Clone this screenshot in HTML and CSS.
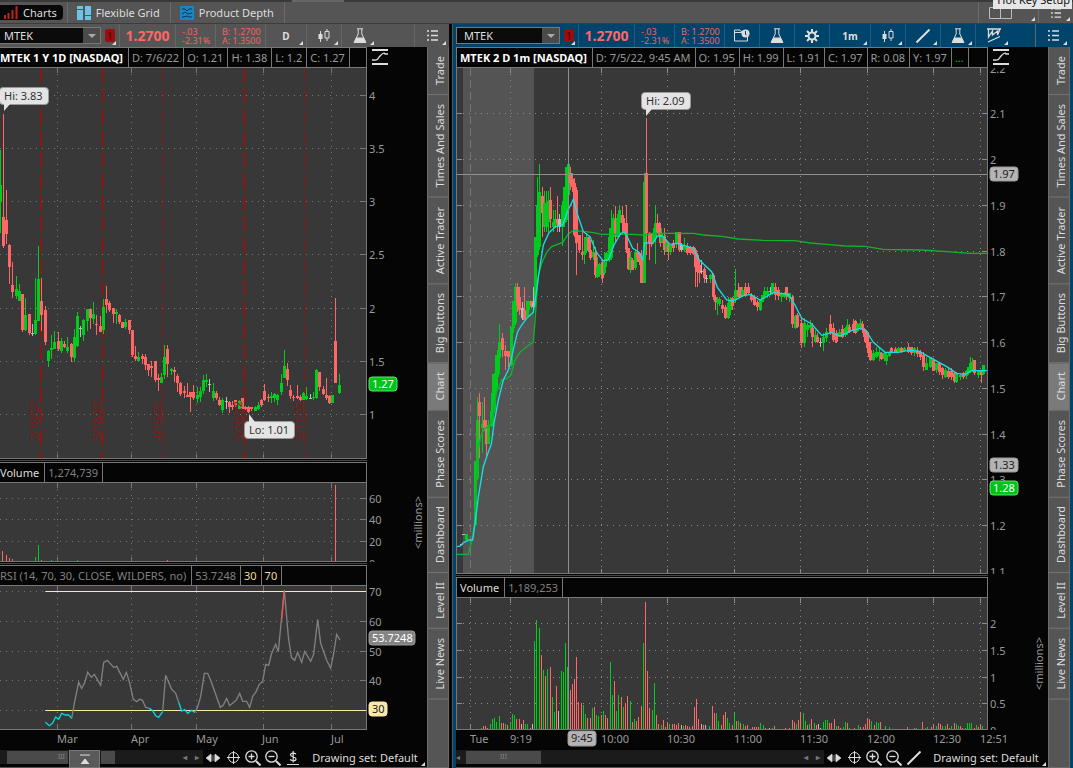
FILE: index.html
```html
<!DOCTYPE html>
<html lang="en">
<head>
  <meta charset="UTF-8">
  <meta name="viewport" content="width=device-width, initial-scale=1.0">
  <title>Charts - MTEK</title>
  <link rel="stylesheet" href="styles.css">
</head>
<body>

  <!-- Shared icons -->
  <svg class="icon-defs" aria-hidden="true">
    <symbol id="i-flask" viewBox="0 0 14 16"><path d="M4 .8h6M5.200 1v5L1.500 13.500h11L8.800 6V1" fill="none" stroke="currentColor"/><path d="M3.600 9.500h6.800l3.100 5.500H.5z" fill="currentColor"/></symbol>
    <symbol id="i-candles" viewBox="0 0 14 14"><path d="M3.500 2v11M10 0v12" stroke="currentColor"/><path d="M1.500 5h4v5h-4z" fill="currentColor"/><path d="M8 2.500h4v6.500H8z" fill="var(--bar)" stroke="currentColor"/></symbol>
    <symbol id="i-list" viewBox="0 0 11 11"><path d="M0 1h2M4 1h7M0 5.500h2M4 5.500h7M0 10h2M4 10h7" stroke="currentColor" stroke-width="1.500"/></symbol>
    <symbol id="i-gear" viewBox="0 0 14 14"><path d="M7 0v14M0 7h14M2 2l10 10M12 2L2 12" stroke="currentColor" stroke-width="2"/><circle cx="7" cy="7" r="3.500" fill="var(--bar)" stroke="currentColor" stroke-width="2"/></symbol>
    <symbol id="i-calendar" viewBox="0 0 16 13"><path d="M9 2.500H7L6 1H.5v11h13V8M.5 3.500H8" fill="none" stroke="currentColor"/><circle cx="11.500" cy="4.500" r="4" fill="currentColor"/><path d="M11.500 2v3.500l1 .5" stroke="var(--bar)" fill="none"/></symbol>
    <symbol id="i-line" viewBox="0 0 14 14"><path d="M.5 13.500l13-13" stroke="currentColor" stroke-width="2"/></symbol>
    <symbol id="i-pattern" viewBox="0 0 14 15"><path d="M0 1h14M1.500 1v8l4-6v4l5-4v4l2.500-6M1 14L13 8.500" fill="none" stroke="currentColor" stroke-width="1.300"/></symbol>
    <symbol id="i-curve" viewBox="0 0 16 16"><path d="M0 1h16M0 15h16" stroke="#ddd" stroke-width="2"/><path d="M0 11h2c4 1 4-2 6-4s4-4 5-2h3" fill="none" stroke="#ddd" stroke-width="1.300"/></symbol>
    <symbol id="i-pan" viewBox="0 0 14 10"><path d="M0 5l5-4v8zM14 5L9 1v8zM6 2v6M8 2v6" fill="currentColor" stroke="currentColor" stroke-width=".6"/></symbol>
    <symbol id="i-target" viewBox="0 0 13 13"><circle cx="6.500" cy="6.500" r="5" fill="none" stroke="currentColor"/><path d="M6.500 0v13M0 6.500h13" stroke="currentColor"/></symbol>
    <symbol id="i-zoomin" viewBox="0 0 16 16"><circle cx="6.500" cy="6.500" r="5.700" fill="none" stroke="currentColor" stroke-width="1.300"/><path d="M6.500 3.500v6M3.500 6.500h6" stroke="currentColor" stroke-width="1.300"/><path d="M11 11l4.500 4.500" stroke="currentColor" stroke-width="2"/></symbol>
    <symbol id="i-zoomout" viewBox="0 0 16 16"><circle cx="6.500" cy="6.500" r="5.700" fill="none" stroke="currentColor" stroke-width="1.300"/><path d="M3.500 6.500h6" stroke="currentColor" stroke-width="1.300"/><path d="M11 11l4.500 4.500" stroke="currentColor" stroke-width="2"/></symbol>
    <symbol id="i-dollar" viewBox="0 0 12 14"><path d="M9 3C7 1.500 3.500 2 3.500 4S9 5.500 9 8 5 10 3 8.500M6.200 0v11.500M0 13.500h12" fill="none" stroke="currentColor" stroke-width="1.200"/></symbol>
  </svg>

  <div class="strip"><span></span></div>

  <nav class="tabs">
    <button class="tab active">
      <svg width="14" height="13" viewBox="0 0 14 13"><path d="M1 9v4M4.500 7v6M8.500 4v9M12.500 0v13" stroke="#c0211d" stroke-width="2"/></svg>Charts
    </button>
    <button class="tab">
      <svg width="14" height="14" viewBox="0 0 14 14" fill="#6cc3e6"><path d="M0 0h6v3H0zM0 4h6v10H0zM8 0h6v9H8zM8 10h6v4H8z"/></svg>Flexible Grid
    </button>
    <button class="tab">
      <svg width="14" height="14" viewBox="0 0 14 14"><rect width="14" height="14" rx="1" fill="#1787c4"/><path d="M2 3h3l2 2 2-2h3M2 8l3-2 3 2 4-1M2 11h2l3-1 2 1h3" fill="none" stroke="#08334f"/></svg>Product Depth
    </button>
    <div class="tabs-right">
      <button class="icon-btn wide corner" aria-label="Layout"><svg width="23" height="12" viewBox="0 0 23 12"><path d="M.5.5h22v11H.5zM11.500.5v11" fill="none" stroke="#bbb"/></svg></button>
      <button class="icon-btn corner" aria-label="Menu"><svg width="10" height="10"><use href="#i-list"/></svg></button>
    </div>
    <div class="tooltip">Hot Key Setup</div>
  </nav>

  <main class="workspace">

    <!-- Daily chart -->
    <section class="panel daily">
      <div class="toolbar">
        <div class="combo"><input type="text" value="MTEK" aria-label="Symbol"><button aria-label="Open symbol list"></button></div>
        <div class="cell link-cell corner"><span class="link">1</span></div>
        <div class="cell last">1.2700</div>
        <div class="cell change"><span>-.03</span><span>-2.31%</span></div>
        <div class="cell quote"><span>B: 1.2700</span><span>A: 1.3500</span></div>
        <button class="cell period corner">D</button>
        <button class="cell corner" aria-label="Style"><svg width="14" height="14"><use href="#i-candles"/></svg></button>
        <button class="cell corner plain" aria-label="Studies"><svg width="14" height="16"><use href="#i-flask"/></svg></button>
        <button class="cell corner menu" aria-label="Menu"><svg width="11" height="11"><use href="#i-list"/></svg></button>
      </div>

      <div class="chart">
        <div class="row head">
          <div class="info"><b>MTEK 1 Y 1D [NASDAQ]</b><span>D: 7/6/22</span><span>O: 1.21</span><span>H: 1.38</span><span>L: 1.2</span><span>C: 1.27</span></div>
          <div class="scale-btn"><svg width="16" height="16"><use href="#i-curve"/></svg></div>
        </div>
        <div class="row price">
          <div class="plot">
            <svg id="dailyPrice" viewBox="0 -6 1098 1170" preserveAspectRatio="none"></svg>
            <span class="expiry" style="left:27px">2/18/22</span>
            <span class="expiry" style="left:89px">3/18/22</span>
            <span class="expiry" style="left:150px">4/15/22</span>
            <span class="expiry" style="left:231px">5/20/22</span>
            <span class="expiry" style="left:292px">6/17/22</span>
            <span class="bubble hi">Hi: 3.83</span>
            <span class="bubble lo">Lo: 1.01</span>
          </div>
          <svg class="axis" viewBox="0 68 60 391">
            <text x="2" y="100">4</text><text x="2" y="153">3.5</text><text x="2" y="206">3</text><text x="2" y="259">2.5</text><text x="2" y="313">2</text><text x="2" y="366">1.5</text><text x="2" y="419">1</text>
            <rect class="tag green" x="2" y="377" width="28" height="14" rx="3"/><text class="on-green" x="5" y="388">1.27</text>
          </svg>
        </div>
        <div class="splitter"></div>
        <div class="row head">
          <div class="info"><span class="name">Volume</span><span class="dim">1,274,739</span></div>
          <div></div>
        </div>
        <div class="row volume">
          <div class="plot"><svg id="dailyVolume" viewBox="0 84 1098 234" preserveAspectRatio="none"></svg></div>
          <svg class="axis" viewBox="0 483 60 79">
            <text x="2" y="503">60</text><text x="2" y="524">40</text><text x="2" y="546">20</text><text x="2" y="568">0</text>
            <text class="unit" x="-549" y="55" transform="rotate(-90)">&lt;millions&gt;</text>
          </svg>
        </div>
        <div class="splitter"></div>
        <div class="row head">
          <div class="info"><span class="dim">RSI (14, 70, 30, CLOSE, WILDERS, no)</span><span class="dim">53.7248</span><span class="cream">30</span><span class="cream">70</span></div>
          <div></div>
        </div>
        <div class="row rsi">
          <div class="plot"><svg id="dailyRsi" viewBox="0 393 1098 429" preserveAspectRatio="none"></svg></div>
          <svg class="axis" viewBox="0 586 60 144">
            <text x="2" y="596">70</text><text x="2" y="626">60</text><text x="2" y="656">50</text><text x="2" y="685">40</text>
            <rect class="tag gray" x="2" y="631" width="46" height="14" rx="3"/><text class="on-gray" x="5" y="642">53.7248</text>
            <rect class="tag yellow" x="2" y="702" width="18" height="14" rx="3"/><text class="on-light" x="5" y="713">30</text>
          </svg>
        </div>
        <svg class="times" viewBox="0 730 427 19" preserveAspectRatio="xMinYMin meet">
          <text x="57" y="743">Mar</text><text x="131" y="743">Apr</text><text x="196" y="743">May</text><text x="262" y="743">Jun</text><text x="331" y="743">Jul</text>
        </svg>
        <div class="footer">
          <div class="scroll">
            <i class="thumb first">III</i>
            <button class="collapse" aria-label="Expand"><svg width="10" height="10" viewBox="0 0 10 10"><path d="M0 1h10M1 10l4-5 4 5z" fill="#ddd" stroke="#ddd"/></svg></button>
            <i class="thumb second"></i>
            <span class="arrows"><b>◂</b><b>▸</b></span>
          </div>
          <button aria-label="Pan"><svg width="14" height="10"><use href="#i-pan"/></svg></button>
          <button aria-label="Crosshair"><svg width="13" height="13"><use href="#i-target"/></svg></button>
          <button aria-label="Zoom in"><svg width="16" height="16"><use href="#i-zoomin"/></svg></button>
          <button aria-label="Zoom out"><svg width="16" height="16"><use href="#i-zoomout"/></svg></button>
          <button aria-label="Price level"><svg width="12" height="14"><use href="#i-dollar"/></svg></button>
          <button class="drawing corner">Drawing set: Default</button>
        </div>
      </div>

      <div class="side">
        <button>Trade</button><button>Times And Sales</button><button>Active Trader</button><button>Big Buttons</button><button class="active">Chart</button><button>Phase Scores</button><button>Dashboard</button><button>Level II</button><button>Live News</button>
      </div>
    </section>

    <div class="divider"></div>

    <!-- Intraday chart -->
    <section class="panel intraday">
      <div class="toolbar">
        <div class="combo"><input type="text" value="MTEK" aria-label="Symbol"><button aria-label="Open symbol list"></button></div>
        <div class="cell link-cell corner"><span class="link">1</span></div>
        <div class="cell last">1.2700</div>
        <div class="cell change"><span>-.03</span><span>-2.31%</span></div>
        <div class="cell quote"><span>B: 1.2700</span><span>A: 1.3500</span></div>
        <button class="cell" aria-label="Calendar"><svg width="16" height="13"><use href="#i-calendar"/></svg></button>
        <button class="cell" aria-label="Edit studies"><svg width="14" height="16"><use href="#i-flask"/></svg></button>
        <button class="cell" aria-label="Settings"><svg width="14" height="14"><use href="#i-gear"/></svg></button>
        <button class="cell period corner">1m</button>
        <button class="cell corner" aria-label="Style"><svg width="14" height="14"><use href="#i-candles"/></svg></button>
        <button class="cell corner" aria-label="Drawings"><svg width="14" height="14"><use href="#i-line"/></svg></button>
        <button class="cell corner" aria-label="Studies"><svg width="14" height="16"><use href="#i-flask"/></svg></button>
        <button class="cell corner plain" aria-label="Patterns"><svg width="14" height="15"><use href="#i-pattern"/></svg></button>
        <button class="cell corner menu" aria-label="Menu"><svg width="11" height="11"><use href="#i-list"/></svg></button>
      </div>

      <div class="chart">
        <div class="row head">
          <div class="info"><b>MTEK 2 D 1m [NASDAQ]</b><span>D: 7/5/22, 9:45 AM</span><span>O: 1.95</span><span>H: 1.99</span><span>L: 1.91</span><span>C: 1.97</span><span>R: 0.08</span><span>Y: 1.97</span><span class="more">...</span></div>
          <div class="scale-btn"><svg width="16" height="16"><use href="#i-curve"/></svg></div>
        </div>
        <div class="row price">
          <div class="plot">
            <svg id="minutePrice" viewBox="21 -66 1590 1515" preserveAspectRatio="none"></svg>
            <span class="bubble hi">Hi: 2.09</span>
          </div>
          <svg class="axis" viewBox="0 68 60 506">
            <text x="2" y="73">2.2</text><text x="2" y="118">2.1</text><text x="2" y="164">2</text><text x="2" y="210">1.9</text><text x="2" y="256">1.8</text><text x="2" y="301">1.7</text><text x="2" y="347">1.6</text><text x="2" y="393">1.5</text><text x="2" y="439">1.4</text><text x="2" y="484">1.3</text><text x="2" y="530">1.2</text><text x="2" y="576">1.1</text>
            <rect class="tag light" x="2" y="167" width="28" height="14" rx="3"/><text class="on-light" x="5" y="178">1.97</text>
            <rect class="tag light" x="2" y="458" width="28" height="14" rx="3"/><text class="on-light" x="5" y="469">1.33</text>
            <rect class="tag green" x="2" y="481" width="28" height="14" rx="3"/><text class="on-green" x="5" y="492">1.28</text>
          </svg>
        </div>
        <div class="splitter"></div>
        <div class="row head">
          <div class="info"><span class="name">Volume</span><span class="dim">1,189,253</span></div>
          <div></div>
        </div>
        <div class="row volume">
          <div class="plot"><svg id="minuteVolume" viewBox="21 744 1590 393" preserveAspectRatio="none"></svg></div>
          <svg class="axis" viewBox="0 598 60 132">
            <text x="2" y="628">2</text><text x="2" y="655">1.5</text><text x="2" y="682">1</text><text x="2" y="708">0.5</text><text x="2" y="735">0</text>
            <text class="unit" x="-690" y="55" transform="rotate(-90)">&lt;millions&gt;</text>
          </svg>
        </div>
        <svg class="times" viewBox="456 730 592 19" preserveAspectRatio="xMinYMin meet">
          <text x="470" y="743">Tue</text><text x="510" y="743">9:19</text><text x="601" y="743">10:00</text><text x="667" y="743">10:30</text><text x="734" y="743">11:00</text><text x="800" y="743">11:30</text><text x="867" y="743">12:00</text><text x="933" y="743">12:30</text><text x="980" y="743">12:51</text>
          <rect class="tag light" x="568" y="731" width="28" height="15" rx="3"/><text class="on-light" x="571" y="742">9:45</text>
        </svg>
        <div class="footer">
          <div class="scroll">
            <span class="arrow-left">◂</span><i class="thumb">III</i>
            <span class="arrows"><b>◂</b><b>▸</b></span>
          </div>
          <button aria-label="Pan"><svg width="14" height="10"><use href="#i-pan"/></svg></button>
          <button aria-label="Crosshair"><svg width="13" height="13"><use href="#i-target"/></svg></button>
          <button aria-label="Zoom in"><svg width="16" height="16"><use href="#i-zoomin"/></svg></button>
          <button aria-label="Zoom out"><svg width="16" height="16"><use href="#i-zoomout"/></svg></button>
          <button aria-label="Draw line"><svg width="14" height="14"><use href="#i-line"/></svg></button>
          <button class="drawing corner">Drawing set: Default</button>
        </div>
      </div>

      <div class="side">
        <button>Trade</button><button>Times And Sales</button><button>Active Trader</button><button>Big Buttons</button><button class="active">Chart</button><button>Phase Scores</button><button>Dashboard</button><button>Level II</button><button>Live News</button>
      </div>
    </section>
  </main>

  <script src="script.js"></script>
</body>
</html>
```
FILE: styles.css
```css
* {
  box-sizing: border-box;
}

body {
  margin: 0;
  height: 100vh;
  display: flex;
  flex-direction: column;
  overflow: hidden;
  background: #050505;
  color: #ddd;
  font-family: "Noto Sans", "Open Sans", sans-serif;
  font-size: 11px;
  line-height: 14px;
}

button, input {
  font: inherit;
  color: inherit;
  border: 0;
  padding: 0;
  margin: 0;
  background: none;
}

svg {
  display: block;
}

.icon-defs {
  position: absolute;
  width: 0;
  height: 0;
}

/* Top window strip and tabs */
.strip {
  height: 2px;
  background: #3a3a3a;
}

.strip span {
  display: block;
  width: 52px;
  height: 2px;
  margin-left: 292px;
  background: #666;
}

.tabs {
  position: relative;
  display: flex;
  height: 22px;
  background: #555;
  border-bottom: 1px solid #3c3c3c;
}

.tab {
  display: flex;
  align-items: center;
  gap: 5px;
  padding: 0 10px 0 9px;
  border-right: 1px solid #6b6b6b;
}

.tab.active {
  padding: 0 6px 0 4px;
  margin: 3px 4px 3px 0;
  border: 0;
  border-radius: 0 4px 4px 0;
  background: #080808;
}

.tab.active + .tab {
  border-left: 1px solid #6b6b6b;
}

.tabs-right {
  display: flex;
  margin-left: auto;
}

.icon-btn {
  position: relative;
  width: 35px;
  display: flex;
  align-items: center;
  justify-content: center;
  border-left: 1px solid #6b6b6b;
}

.icon-btn.wide {
  width: 60px;
  padding-right: 16px;
}

.tooltip {
  position: absolute;
  top: -11px;
  right: 1px;
  height: 18px;
  padding: 0 2px 0 4px;
  background: #e6e6e6;
  color: #111;
  line-height: 18px;
}

/* Panels */
.workspace {
  flex: 1;
  min-height: 0;
  display: flex;
}

.panel {
  display: grid;
  grid-template-columns: 1fr 22px;
  grid-template-rows: 23px 1fr;
  min-width: 0;
}

.daily {
  --bar: #555;
  flex: 449 1 0;
}

/* The side borders come on top of the flex share */
.intraday {
  --bar: #00436b;
  flex: 614 1 0;
  border: 0 solid #00436b;
  border-width: 0 3px;
}

.divider {
  width: 4px;
  border-right: 1px solid #555;
}

.toolbar {
  grid-column: 1 / -1;
  display: flex;
  background: var(--bar);
}

.combo {
  display: flex;
  width: 101px;
  margin: 3px 0;
  border: 1px solid #777;
  border-left: 0;
  background: #0b0b0b;
}

.combo input {
  flex: 1;
  width: 0;
  padding-left: 4px;
}

.combo button {
  width: 17px;
  background: #4a4a4a;
  display: flex;
  align-items: center;
  justify-content: center;
}

.combo button::after {
  content: "";
  border: 4px solid transparent;
  border-top-color: #aaa;
  border-bottom: 0;
}

.intraday .combo {
  width: 104px;
  border-left: 1px solid #777;
}

.intraday .combo input {
  padding-left: 7px;
}

.cell {
  position: relative;
  width: 35px;
  display: flex;
  align-items: center;
  justify-content: center;
  border-right: 1px solid #666;
  color: #ddd;
}

.intraday .cell {
  border-color: #1d5c85;
}

/* Small drop-down mark in the lower right corner */
.corner::after {
  content: "";
  position: absolute;
  right: 3px;
  bottom: 2px;
  border-left: 4px solid transparent;
  border-bottom: 4px solid #ddd;
}

.cell.link-cell {
  width: 19px;
}

.link {
  width: 10px;
  height: 13px;
  border-radius: 2px;
  background: #9c0d0d;
  color: #4d0000;
  line-height: 13px;
  text-align: center;
}

.cell.last {
  width: 56px;
  color: #f66;
  font-size: 14px;
  font-weight: bold;
}

.cell.change, .cell.quote {
  flex-direction: column;
  align-items: flex-start;
  padding-left: 6px;
  color: #f06464;
  font-size: 9px;
  line-height: 9px;
}

.cell.change {
  width: 40px;
}

.cell.quote {
  width: 50px;
}

.cell.period {
  width: 41px;
  font-size: 10px;
  font-weight: bold;
}

.cell.plain {
  border-right: 0;
}

.cell.menu {
  margin-left: auto;
  border-right: 0;
  border-left: 1px solid #666;
}

.chart {
  display: flex;
  flex-direction: column;
  min-width: 0;
  min-height: 0;
}

.row {
  display: grid;
  grid-template-columns: 1fr 60px;
  min-height: 0;
}

.head {
  height: 21px;
}

.info {
  display: flex;
  min-width: 0;
  overflow: hidden;
  border: 1px solid #777;
  border-left: 0;
  color: #999;
  line-height: 19px;
  white-space: nowrap;
}

.intraday .info {
  border-left: 1px solid #777;
}

.info > * {
  padding: 0 4px 0 3px;
  border-right: 1px solid #777;
}

.info > :first-child {
  padding: 0 5px 0 0;
  color: #fff;
}

.intraday .info > :first-child {
  padding-left: 3px;
}

.info .name:first-child {
  color: #ddd;
}

.info .dim, .info .dim:first-child {
  color: #808080;
}

.info .cream {
  color: #f0dc9c;
}

.info .more {
  color: #00c41a;
}

.scale-btn {
  padding: 2px 0 0 5px;
}

.plot {
  position: relative;
  min-width: 0;
  min-height: 0;
  background: #383838;
  border: 0 solid #777;
  border-width: 0 1px 1px 0;
}

.intraday .plot {
  border-left-width: 1px;
}

.plot svg {
  width: 100%;
  height: 100%;
}

.axis {
  width: 60px;
  height: 100%;
}

.axis text, .times text {
  fill: #999;
  font-size: 11px;
}

.times {
  width: 100%;
  height: 19px;
}

.tag {
  stroke: #999;
}

.tag.green {
  fill: #00c41a;
  stroke: #6ade79;
}

.tag.gray {
  fill: #848484;
}

.tag.light {
  fill: #b4b4b4;
}

.tag.yellow {
  fill: #fbe9a9;
  stroke: #fbe9a9;
}

.axis .on-green, .axis .on-gray {
  fill: #fff;
}

.axis .on-light, .times .on-light {
  fill: #222;
}

/* Row heights share the free space */
.daily .price { flex: 391 1 0; }
.daily .volume { flex: 79 1 0; }
.daily .rsi { flex: 144 1 0; }
.intraday .price { flex: 506 1 0; }
.intraday .volume { flex: 132 1 0; }

.splitter {
  height: 3px;
  margin-right: 60px;
  border-top: 1px solid #050505;
  border-bottom: 1px solid #050505;
  background: #444;
}

/* Labels over the plots */
.bubble {
  position: absolute;
  height: 18px;
  padding: 0 5px 0 4px;
  border: 1px solid #999;
  border-radius: 4px;
  background: #e4e4e4;
  color: #333;
  line-height: 16px;
  white-space: nowrap;
}

.bubble::after {
  content: "";
  position: absolute;
  left: 4px;
  top: 16px;
  border-top: 7px solid #e4e4e4;
  border-right: 6px solid transparent;
}

.daily .bubble.hi {
  left: -1px;
  top: 19px;
}

.daily .bubble.lo {
  left: 244px;
  top: 353px;
}

.daily .bubble.lo::after {
  top: -8px;
  border-top: 0;
  border-bottom: 8px solid #e4e4e4;
}

.intraday .bubble.hi {
  left: 184px;
  top: 24px;
}

.expiry {
  position: absolute;
  bottom: 17px;
  writing-mode: vertical-rl;
  transform: rotate(180deg);
  color: #861616;
  line-height: 13px;
}

/* Bottom bar */
.footer {
  display: flex;
  height: 19px;
  padding-bottom: 1px;
  border-bottom: 1px solid #555;
}

.footer button {
  width: 20px;
  display: flex;
  align-items: center;
  justify-content: center;
}

.footer .drawing {
  position: relative;
  width: 124px;
}

.footer .drawing::after {
  right: 2px;
  bottom: 0;
}

.scroll {
  flex: 1;
  display: flex;
  align-items: center;
  height: 14px;
  margin-top: 1px;
  background: #1b1b1b;
  color: #777;
  font-size: 8px;
}

.thumb {
  width: 75px;
  height: 13px;
  background: #4a4a4a;
  color: #888;
  font-size: 7px;
  font-style: normal;
  line-height: 12px;
  text-align: center;
}

.thumb.first {
  width: 61px;
  margin-left: 7px;
  padding-right: 3px;
  text-align: right;
}

.thumb.second {
  width: 14px;
}

.footer .collapse {
  width: 31px;
  height: 18px;
  margin: 4px 1px 0;
  border: 1px solid #777;
  background: #5a5a5a;
}

.arrow-left {
  width: 10px;
}

.arrows {
  display: flex;
  margin-left: auto;
  gap: 8px;
  padding-right: 4px;
}

/* Vertical gadget tabs */
.side {
  display: flex;
  flex-direction: column;
  border: 1px solid #6c6c6c;
  border-top: 0;
  background: #555;
}

.side button {
  padding: 9px 3px 9px 0;
  border-top: 1px solid #747474;
  writing-mode: vertical-rl;
  transform: rotate(180deg);
  color: #ddd;
  line-height: 16px;
  text-align: center;
}

.side button.active {
  background: #7a7a7a;
}
```
FILE: script.js
```javascript
const NS = 'http://www.w3.org/2000/svg';
const colors = { r: '#ff6666', g: '#00cc1e', w: '#bbbbbb' };

/* x, high, body top, body bottom, low, color */
const dailyCandles = `
1 241 345 396 488 g|10 131 441 527 534 r|19 360 450 491 521 r|28 522 525 590 643 r|37 576 645 666 684 r|49 618 657 678 688 g
58 642 663 693 693 g|67 672 672 779 785 r|76 684 735 779 783 g|88 732 732 789 794 r|97 762 788 791 797 w|106 624 750 791 795 g
115 528 627 752 752 g|124 624 693 735 783 r|136 708 720 816 825 r|145 840 843 873 890 g|154 794 834 840 868 g|163 783 816 836 837 g
175 786 813 837 843 r|184 804 813 842 848 g|193 813 822 831 834 r|202 801 831 842 850 g|214 819 822 861 876 r|223 777 801 863 875 g
232 726 738 827 831 g|241 768 774 777 801 w|250 747 750 795 812 g|262 717 717 753 784 g|271 716 717 744 777 r|280 696 732 746 762 g
289 734 762 765 795 r|301 738 768 785 785 r|310 688 711 779 792 g|319 648 687 705 730 r|328 693 699 720 726 r|340 714 714 732 758 r
349 717 726 732 762 g|358 731 735 756 762 r|367 756 756 773 774 r|376 747 756 770 777 g|388 750 750 779 791 r|397 780 780 855 861 r
406 828 858 867 872 r|415 845 861 873 873 g|427 852 858 866 882 r|436 852 861 885 900 r|445 882 883 900 918 r|454 874 888 893 921 r
466 873 873 930 936 r|475 912 924 930 962 r|484 910 921 939 939 g|493 825 861 915 926 g|502 825 837 882 921 r|514 895 897 903 916 g
523 891 900 906 936 r|532 911 918 939 966 r|541 936 939 971 978 r|553 947 963 968 983 r|562 939 974 980 981 r|571 966 966 980 1026 r
580 946 966 984 989 r|592 951 975 987 998 g|601 951 963 982 996 g|610 915 930 962 971 g|619 912 930 935 951 g|628 927 941 943 966 w
640 939 963 983 992 g|649 962 969 984 990 r|658 981 990 1004 1008 r|667 985 990 1019 1029 g|679 981 993 996 1016 w|688 993 996 1011 1029 r
697 992 1004 1012 1020 r|706 990 990 1004 1011 r|719 990 993 1017 1018 g|727 984 984 1017 1018 r|736 1008 1011 1018 1021 r
745 1008 1011 1025 1030 r|754 1010 1012 1017 1023 r|766 1008 1011 1022 1023 g|775 996 1005 1018 1021 g|784 987 990 1004 1011 r
793 942 963 990 993 r|805 972 980 983 995 r|814 966 978 984 998 g|823 968 972 984 996 g|832 972 975 990 1005 g|844 912 938 966 974 g
853 840 888 923 923 g|862 879 896 930 947 r|871 944 960 978 986 r|881 975 980 983 992 r|892 945 978 984 986 r|901 975 981 989 992 r
910 966 969 989 990 g|919 950 978 986 989 g|931 972 983 985 988 w|940 966 981 984 990 g|949 897 900 983 987 g|958 906 906 951 963 r
970 948 957 972 975 r|979 924 975 985 989 r|988 975 978 998 1001 r|997 975 975 998 1000 g|1006 684 813 938 938 r|1018 912 945 968 971 g`;

/* Pre-market and the first hour */
const openCandles = `
35 1363 1363 1366 1366 w|41 1332 1332 1335 1335 w|50 1332 1332 1350 1350 g|77 1113 1113 1305 1308 g|83 921 990 1165 1170 g|89 909 936 977 1105 r
98 936 1003 1015 1088 g|104 921 990 1013 1022 r|109 990 1010 1061 1100 r|116 990 1005 1061 1061 g|124 910 963 1008 1010 g|128 852 910 1005 1008 g
134 850 852 960 970 g|140 795 795 895 910 g|145 780 780 852 860 g|149 703 755 805 825 g|157 730 745 780 800 r|166 765 783 797 840 r
175 782 782 800 830 r|184 712 712 825 830 g|190 632 632 715 730 g|196 580 590 700 705 g|203 580 590 645 665 r|209 590 620 660 675 r
218 635 655 685 690 w|223 592 660 690 690 r|232 632 632 680 682 g|239 632 632 652 660 g|245 632 632 648 655 r|250 592 640 652 670 w
256 440 440 640 650 g|262 262 345 495 500 g|268 222 305 470 480 g|277 291 318 368 440 r|283 303 340 412 425 g|289 303 340 410 425 g
295 303 333 395 425 g|301 291 330 388 415 r|310 360 395 412 425 g|317 360 388 405 415 g|322 318 388 400 425 r|328 372 388 410 425 w
338 333 345 412 468 g|344 292 292 400 410 g|350 232 232 390 395 g|355 222 222 315 340 g|361 232 250 280 300 r|368 250 268 290 305 r
374 265 278 435 440 r|380 290 300 460 555 r|389 435 435 480 490 r|397 420 485 495 510 r|403 440 482 495 522 g|409 430 440 482 490 g
415 440 440 480 485 r|421 450 480 505 510 r|430 450 485 500 510 g|436 470 490 555 565 r|442 500 530 560 565 g|449 520 522 555 560 g
457 510 515 565 580 r|463 485 515 550 555 g|470 485 490 512 530 g|477 415 440 510 515 g|483 360 415 505 510 g|490 372 385 440 470 g
497 347 390 430 455 r|503 372 385 440 440 g|508 345 360 400 440 g|517 348 375 400 430 r|523 385 400 428 435 r|529 345 400 480 490 r
535 475 475 538 540 r|541 485 500 540 550 g|548 505 510 540 540 r|555 480 485 535 540 g|562 460 485 500 515 r|568 485 490 515 525 r
575 480 510 580 580 r|583 250 275 578 580 g|590 85 250 430 495 r|598 425 430 460 510 r|604 430 430 460 470 r|610 415 430 455 460 g
617 345 400 440 522 g|623 372 400 425 430 r|629 395 400 435 450 r|635 418 430 460 460 r|645 435 450 480 485 g`;

/* Late morning, drawn in a group moved by 630, 330 */
const morningCandles = `
1 70 110 128 140 r|5 85 100 125 128 g|13 85 110 150 165 r|19 125 130 155 155 g|25 130 135 155 180 r|31 135 135 155 165 g|40 120 130 145 155 r
50 97 97 130 145 g|58 97 97 150 155 r|64 130 135 150 155 w|73 115 135 150 155 g|82 130 138 160 165 r|91 138 140 158 165 r|100 138 140 162 165 r
107 145 150 200 262 r|112 160 165 215 262 r|119 180 195 220 250 r|124 180 212 215 222 w|133 200 208 235 250 r|139 225 234 237 250 w|150 222 224 236 248 g
160 220 225 290 300 r|166 285 290 305 330 r|172 290 298 310 345 g|178 290 298 312 318 g|186 300 315 328 340 r|196 315 320 355 358 r|204 290 310 355 358 g
210 290 300 330 345 g|217 290 295 318 330 r|226 207 270 300 308 g|236 250 270 290 295 r|242 262 262 290 290 r|247 262 270 285 290 g|256 250 262 285 288 r
265 250 262 280 285 r|274 280 285 300 305 r|283 285 290 315 318 r|292 300 305 320 332 r|300 300 300 330 332 g|307 285 285 305 305 g|314 262 272 290 298 g
323 262 272 285 295 g|331 262 272 275 285 w|338 250 250 280 285 g|347 250 262 285 300 r|355 262 270 288 300 r|364 275 278 290 305 g|372 275 278 290 295 g
380 262 262 288 300 r|388 278 280 295 305 g|397 285 290 372 385 r|406 345 347 385 388 g|413 340 345 380 385 r|424 350 370 430 445 r|433 355 370 430 440 g
442 370 375 390 410 g|451 360 375 385 400 g|458 370 385 410 440 r|467 390 405 425 428 g|473 400 410 425 430 r|481 415 426 429 440 w|490 400 410 430 452 g
500 385 395 415 425 g|511 345 372 400 405 r|520 370 385 420 425 r|529 390 400 425 430 r|538 388 395 410 412 g|547 375 388 412 415 r|556 380 385 405 412 g
562 358 375 400 405 g|568 372 380 395 400 r|580 358 372 390 400 r|586 360 362 400 402 r|593 370 372 392 395 g|600 358 370 388 390 g|607 362 372 388 398 r
614 385 387 410 425 r|620 390 392 430 445 r|626 395 425 460 470 r|632 425 450 480 482 r|640 450 460 480 482 g|648 440 455 470 475 g|657 440 455 468 482 g
665 455 460 478 480 r|673 455 458 478 482 g|679 460 465 482 495 g|687 452 455 468 470 g|695 442 444 455 460 r|705 442 448 455 458 r|714 440 443 455 458 g
723 442 444 455 458 r|732 440 443 453 455 g|745 428 440 455 458 r|754 440 440 458 465 r|762 440 443 458 468 g|771 442 452 462 472 r|780 450 455 470 480 r
790 455 465 500 512 r|800 470 488 510 510 g|810 470 470 500 505 g|820 475 480 512 512 r|829 488 490 510 518 g|838 485 490 515 525 r|846 500 505 525 538 r
855 505 510 530 535 g|864 500 512 530 538 r|874 505 512 532 540 r|882 515 520 542 548 r|890 515 520 545 550 g|900 520 524 532 540 g|909 515 520 532 538 r
918 510 512 528 538 g|924 500 500 520 525 g|931 470 490 512 520 g|937 475 485 510 515 g|943 480 480 520 525 r|954 510 514 526 535 g|964 510 512 525 550 r|971 495 495 522 525 g`;

/* x, top, color */
const dailyBars = '7 288 r|19 300 r|28 309 r|37 312 r|106 306 g|115 270 g|124 315 r|154 315 g|232 315 g|502 315 r|1006 90 r';

const openBars = `
95 1133 g|101 1128 r|107 1128 r|113 1134 r|122 1122 g|128 1107 g|134 1104 g|139 1116 g|149 1098 g|155 1119 r|160 1119 r|166 1122 g|172 1125 r
181 1115 g|187 1092 g|193 1095 g|199 1107 r|208 1107 r|214 1122 w|220 1110 r|226 1122 g|232 1122 g|241 1134 r|248 1122 w|254 873 g|260 810 g|268 834 g
275 915 r|281 960 g|287 978 r|293 957 g|301 951 r|307 1040 g|314 1086 g|320 1008 r|326 1083 w|334 963 g|340 965 g|346 879 g|352 951 g|361 1020 r
367 1002 r|374 987 r|380 921 r|386 1056 r|395 1060 r|401 1065 g|406 1092 g|413 1104 r|421 1104 r|428 1074 g|434 1071 r|440 1095 g|446 1098 g|454 1095 r
460 1083 g|466 1095 r|472 1104 r|482 936 g|487 1035 g|493 993 r|499 1083 g|505 1035 g|514 1041 r|520 1071 g|526 1062 r|532 1038 r|541 1053 g|547 1116 r
553 1107 g|559 1113 r|565 1101 r|574 1068 r|580 879 g|586 756 r|592 963 r|599 1074 r|607 1080 g|613 999 g|619 1095 r|626 1122 r|634 1125 g|640 1110 r|646 1131 r`;

const morningBars = `
5 465 g|11 450 r|23 457 r|28 462 g|37 462 r|43 462 r|49 466 r|56 460 r|64 465 w|70 468 g|76 465 r|82 468 r|88 471 r|97 468 r|103 411 r|109 387 r|116 447 r
125 462 w|131 465 r|136 465 w|149 468 g|158 408 r|163 429 r|169 429 g|176 453 g|185 465 r|190 435 r|196 426 r|202 444 g|208 459 g|217 465 r|223 429 g
229 453 r|236 453 g|242 459 r|250 462 g|256 468 r|262 465 r|277 471 r|283 471 r|289 471 r|295 471 r|301 459 g|310 465 g|316 474 r|328 475 w|337 474 g
343 468 r|376 474 r|388 474 r|398 450 r|403 456 r|409 462 g|415 450 r|421 429 r|430 429 g|436 453 g|442 465 r|448 462 g|455 447 r|463 459 g|469 465 r
475 462 w|481 474 w|490 456 g|496 450 g|502 450 g|508 459 r|514 459 r|523 447 r|529 468 g|535 468 r|541 474 r|550 471 g|556 456 g|562 459 r|568 474 g
584 474 r|596 465 g|602 471 r|610 471 r|616 462 r|622 447 r|628 447 r|634 453 g|642 465 r|649 456 g|655 459 g|661 456 r|676 468 g|688 471 g|742 471 r
763 474 r|769 474 g|787 456 r|796 474 g|802 471 g|814 471 r|820 465 r|829 468 g|835 459 r|841 462 r|847 468 g|856 468 g|862 462 r|868 474 r|875 468 g
883 459 r|889 462 g|895 468 g|901 468 r|907 474 r|916 474 g|922 459 g|928 459 g|934 459 g|943 474 r|949 465 g|956 472 r|962 465 r|967 468 g`;

const averagePrice = '20,1393 55,1393 68,1340 75,1290 83,1090 92,1040 104,1015 118,1010 128,980 140,905 155,870 170,865 182,857 195,810 210,787 232,768 250,757 256,680 264,560 275,520 290,487 305,470 338,457 355,432 370,421 400,424 430,428 455,433 550,433 590,436 600,430 730,430 760,435 815,439 865,447 940,451 1035,452 1080,459 1130,463 1185,468 1245,469 1300,478 1415,480 1480,484 1520,487 1560,490 1611,490';

const movingAverage = '20,1370 32,1368 40,1358 58,1350 68,1350 75,1300 85,1220 100,1130 110,1100 124,1062 132,1000 145,930 160,870 175,840 182,815 192,770 203,725 215,705 230,685 250,667 260,600 268,540 280,465 297,428 318,409 338,405 352,365 370,328 383,375 400,425 420,440 440,488 460,513 475,510 492,465 512,430 525,426 548,475 565,485 578,508 584,458 608,461 622,438 638,438 660,463 682,460 730,475 748,510 785,545 802,592 830,630 850,633 880,617 902,613 930,630 970,608 1015,613 1035,645 1055,685 1085,702 1115,736 1145,728 1170,738 1205,722 1230,715 1248,722 1270,757 1305,787 1345,787 1375,781 1405,783 1445,805 1490,830 1520,850 1545,853 1565,842 1611,842';

function add(parent, tag, attrs) {
  const el = document.createElementNS(NS, tag);
  for (const key in attrs) el.setAttribute(key, attrs[key]);
  parent.appendChild(el);
  return el;
}

function parse(text) {
  return text.trim().split(/[|\n]+/).map(row => row.split(' ').map(v => isNaN(v) ? v : Number(v)));
}

function group(svg, x, y) {
  return add(svg, 'g', { transform: `translate(${x} ${y})`, 'shape-rendering': 'crispEdges' });
}

/* Dotted grid with short ticks on the edges */
function grid(svg, xs, ys, color) {
  const { x, y, width, height } = svg.viewBox.baseVal;
  const g = group(svg, 0, 0);
  g.setAttribute('stroke', color);
  g.setAttribute('stroke-width', 3);
  xs.forEach(v => {
    add(g, 'path', { d: `M${v} ${y}V${y + height}`, 'stroke-dasharray': '3 15' });
    add(g, 'path', { d: `M${v} ${y}v14M${v} ${y + height}v-12` });
  });
  ys.forEach(v => {
    add(g, 'path', { d: `M${x} ${v}H${x + width}`, 'stroke-dasharray': '3 15' });
    add(g, 'path', { d: `M${x + width} ${v}h-14` });
    if (x) add(g, 'path', { d: `M${x} ${v}h14` });
  });
}

function candles(parent, text) {
  parse(text).forEach(([x, high, top, bottom, low, c]) => {
    add(parent, 'rect', { x: x - 1, y: high, width: 3, height: Math.max(low - high, 3), fill: colors[c] });
    add(parent, 'rect', { x: x - 4, y: top, width: 9, height: Math.max(bottom - top, 3), fill: colors[c] });
  });
}

function bars(parent, text, base) {
  parse(text).forEach(([x, top, c]) => {
    add(parent, 'rect', { x: x - 1, y: top, width: 3, height: base - top, fill: colors[c] });
  });
}

function line(svg, points, color, width) {
  add(svg, 'polyline', { points, fill: 'none', stroke: color, 'stroke-width': width });
}

/* Daily */
const months = [172, 394, 589, 790, 994];
const dailyPrice = document.getElementById('dailyPrice');
grid(dailyPrice, months, [77, 236, 394, 553, 715, 874, 1033], '#787878');
[[122, 4], [307, 4], [490, 2], [733, 4], [916, 2]].forEach(([x, w]) => {
  add(dailyPrice, 'path', { d: `M${x} -6V1164`, stroke: '#b00a00', 'stroke-width': w, 'stroke-dasharray': '46 18', 'stroke-dashoffset': 3 });
});
candles(group(dailyPrice, 0, 0), dailyCandles);

const dailyVolume = document.getElementById('dailyVolume');
grid(dailyVolume, months, [130, 193, 259], '#787878');
bars(group(dailyVolume, 0, 0), dailyBars, 318);

const dailyRsi = document.getElementById('dailyRsi');
grid(dailyRsi, months, [409, 499, 589, 676, 766], '#787878');
add(dailyRsi, 'path', { d: 'M136 409.500H1098M136 766.500H1098', stroke: '#fbe9a9', 'stroke-width': 3 });
line(dailyRsi, '215,790 225,735 236,682 245,700 254,683 263,652 274,667 283,658 302,691 311,622 322,616 341,637 350,634 370,673 379,652 388,680 400,733 410,740 418,733 427,735 437,757 448,760', '#808080', 4);
line(dailyRsi, '488,770 497,661 515,703 527,715 536,742', '#808080', 4);
line(dailyRsi, '584,772 592,758 602,725 613,655 623,655 632,676 661,757 670,750 680,730 689,752 709,735 719,715 728,739 740,739 749,757 758,724 767,712 778,688 788,679 797,628 806,631 815,595 827,568 835,590 844,495 853,405 865,545 874,607 884,616 893,592 905,622 914,589 932,619 941,598 953,493 962,565 980,616 992,640 1001,595 1010,538 1020,555', '#808080', 4);
line(dailyRsi, '136,802 148,812 158,804 167,786 176,793 185,775 196,780 206,780 215,790', '#00d8e0', 4);
line(dailyRsi, '448,760 457,766 468,783 476,787 488,770', '#00d8e0', 4);
line(dailyRsi, '536,742 545,768 554,764 563,775 575,766 584,772', '#00d8e0', 4);
line(dailyRsi, '845,495 852,412', '#f05050', 4);

/* Intraday */
const hours = [181, 454, 652, 853, 1051, 1252, 1450, 1591];
const minutePrice = document.getElementById('minutePrice');
add(minutePrice, 'rect', { x: 39, y: -66, width: 213, height: 1515, fill: '#545454' });
grid(minutePrice, hours, [71, 208, 346, 484, 619, 757, 895, 1033, 1168, 1306], '#8c8c8c');
add(minutePrice, 'path', { d: 'M61.500 -66V1449', stroke: '#757575', 'stroke-width': 3, 'stroke-dasharray': '24 12' });
candles(group(minutePrice, 0, 0), openCandles);
candles(group(minutePrice, 630, 330), morningCandles);
line(minutePrice, averagePrice, '#0cb52c', 4);
line(minutePrice, movingAverage, '#14e0e6', 4);
add(minutePrice, 'path', { d: 'M355.500 -66V1449M21 253.500H1611', stroke: '#8f8f8f', 'stroke-width': 3 });

const minuteVolume = document.getElementById('minuteVolume');
grid(minuteVolume, [61, ...hours], [820, 901, 982, 1060], '#8c8c8c');
bars(group(minuteVolume, 0, 0), openBars, 1138);
bars(group(minuteVolume, 630, 660), morningBars, 478);
add(minuteVolume, 'path', { d: 'M355.500 744V1138', stroke: '#8f8f8f', 'stroke-width': 3 });
```
